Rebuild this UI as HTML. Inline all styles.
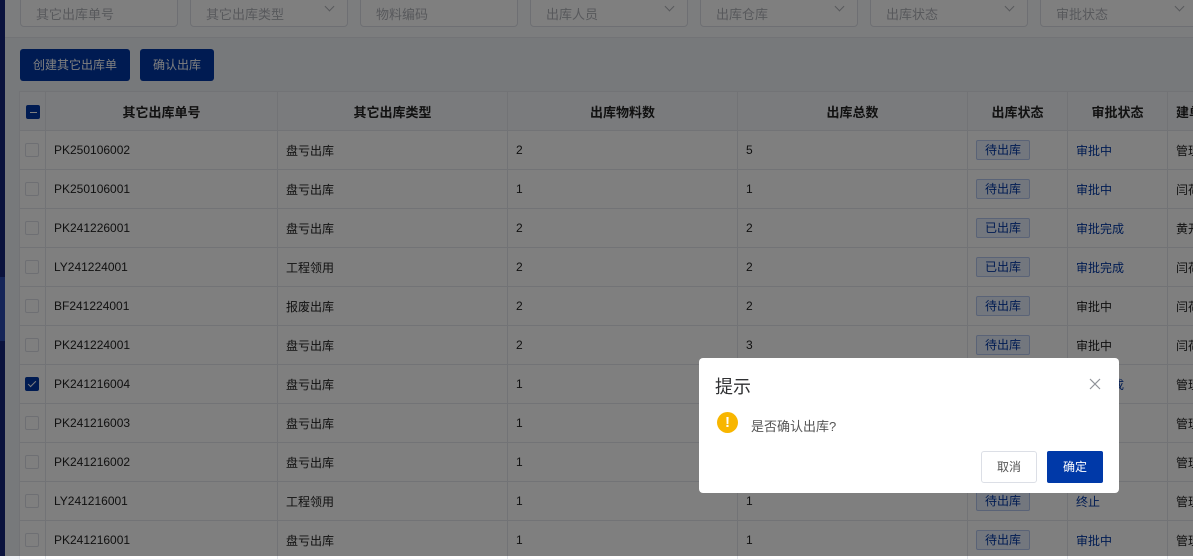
<!DOCTYPE html>
<html><head><meta charset="utf-8"><style>
*{box-sizing:border-box;margin:0;padding:0}
body{width:1193px;height:556px;overflow:hidden;position:relative;background:#eff2f6;font-family:"Liberation Sans","Noto Sans CJK SC",sans-serif;font-size:12px;color:#222}
.strip{position:absolute;left:0;top:0;width:5px;height:556px;background:#14257a}
.strip2{position:absolute;left:0;top:277px;width:5px;height:64px;background:#2a4bb0}
.filt{position:absolute;left:5px;top:0;width:1188px;height:38px;background:#f9fafc;border-bottom:1px solid #e4e7ed}
.in{position:absolute;top:-6px;width:158px;height:33px;border:1px solid #dcdfe6;border-radius:4px;background:#fff;color:#b0b3b9;font-size:13px;padding:9px 0 0 15px}
.in .ar{position:absolute;right:14px;top:8px;width:7px;height:7px;border-right:1px solid #b0b3b9;border-bottom:1px solid #b0b3b9;transform:rotate(45deg)}
.btn{position:absolute;top:49px;height:32px;background:#0037a4;color:#fff;border-radius:3px;font-size:12px;line-height:32px;text-align:center}
table{position:absolute;left:19px;top:91px;width:1208px;border-collapse:collapse;table-layout:fixed;background:#fff}
td,th{border:1px solid #e4e7ed;height:39px;padding:0 8px;white-space:nowrap;overflow:hidden;font-size:12px}
th{background:#f5f7fa;font-weight:bold;color:#222;font-size:13px}
.cb{display:inline-block;width:14px;height:14px;border:1px solid #dcdfe6;border-radius:2px;background:#fff;vertical-align:middle;position:relative}
.cb.on{background:#0037a4;border-color:#0037a4}
.tag{display:inline-block;border:1px solid #b4c6ee;background:#e6eefc;color:#0037a4;padding:0 8px;height:20px;line-height:18px;border-radius:2px}
.bl{color:#0037a4}
.ov{position:absolute;left:0;top:0;width:1193px;height:556px;background:rgba(0,0,0,.5)}
.dlg{position:absolute;left:699px;top:358px;width:420px;height:135px;background:#fff;border-radius:4px}
</style></head><body>
<div class="strip"></div><div class="strip2"></div>
<div class="filt">
<div class="in" style="left:15px">其它出库单号</div>
<div class="in" style="left:185px">其它出库类型<span class="ar"></span></div>
<div class="in" style="left:355px">物料编码</div>
<div class="in" style="left:525px">出库人员<span class="ar"></span></div>
<div class="in" style="left:695px">出库仓库<span class="ar"></span></div>
<div class="in" style="left:865px">出库状态<span class="ar"></span></div>
<div class="in" style="left:1035px">审批状态<span class="ar"></span></div>
</div>
<div class="btn" style="left:20px;width:110px">创建其它出库单</div>
<div class="btn" style="left:140px;width:74px">确认出库</div>
<table>
<colgroup><col style="width:26px"><col style="width:232px"><col style="width:230px"><col style="width:230px"><col style="width:230px"><col style="width:100px"><col style="width:100px"><col style="width:60px"></colgroup>
<tr><th style="padding:0 5px"><span class="cb on"><span style="position:absolute;left:3px;top:6px;width:7px;height:1px;background:#fff"></span></span></th><th>其它出库单号</th><th>其它出库类型</th><th>出库物料数</th><th>出库总数</th><th>出库状态</th><th>审批状态</th><th style="text-align:left">建单人</th></tr>
<tr><td style="padding:0 5px"><span class="cb"></span></td><td>PK250106002</td><td>盘亏出库</td><td>2</td><td>5</td><td><span class="tag">待出库</span></td><td class="bl">审批中</td><td>管理员</td></tr>
<tr><td style="padding:0 5px"><span class="cb"></span></td><td>PK250106001</td><td>盘亏出库</td><td>1</td><td>1</td><td><span class="tag">待出库</span></td><td class="bl">审批中</td><td>闫荷</td></tr>
<tr><td style="padding:0 5px"><span class="cb"></span></td><td>PK241226001</td><td>盘亏出库</td><td>2</td><td>2</td><td><span class="tag">已出库</span></td><td class="bl">审批完成</td><td>黄开</td></tr>
<tr><td style="padding:0 5px"><span class="cb"></span></td><td>LY241224001</td><td>工程领用</td><td>2</td><td>2</td><td><span class="tag">已出库</span></td><td class="bl">审批完成</td><td>闫荷</td></tr>
<tr><td style="padding:0 5px"><span class="cb"></span></td><td>BF241224001</td><td>报废出库</td><td>2</td><td>2</td><td><span class="tag">待出库</span></td><td>审批中</td><td>闫荷</td></tr>
<tr><td style="padding:0 5px"><span class="cb"></span></td><td>PK241224001</td><td>盘亏出库</td><td>2</td><td>3</td><td><span class="tag">待出库</span></td><td>审批中</td><td>闫荷</td></tr>
<tr><td style="padding:0 5px"><span class="cb on"><span style="position:absolute;left:4px;top:1px;width:4px;height:8px;border-right:1.5px solid #fff;border-bottom:1.5px solid #fff;transform:rotate(45deg)"></span></span></td><td>PK241216004</td><td>盘亏出库</td><td>1</td><td>1</td><td><span class="tag">待出库</span></td><td class="bl">审批完成</td><td>管理员</td></tr>
<tr><td style="padding:0 5px"><span class="cb"></span></td><td>PK241216003</td><td>盘亏出库</td><td>1</td><td>1</td><td><span class="tag">待出库</span></td><td class="bl">审批中</td><td>管理员</td></tr>
<tr><td style="padding:0 5px"><span class="cb"></span></td><td>PK241216002</td><td>盘亏出库</td><td>1</td><td>1</td><td><span class="tag">待出库</span></td><td class="bl">审批中</td><td>管理员</td></tr>
<tr><td style="padding:0 5px"><span class="cb"></span></td><td>LY241216001</td><td>工程领用</td><td>1</td><td>1</td><td><span class="tag">待出库</span></td><td class="bl">终止</td><td>管理员</td></tr>
<tr><td style="padding:0 5px"><span class="cb"></span></td><td>PK241216001</td><td>盘亏出库</td><td>1</td><td>1</td><td><span class="tag">待出库</span></td><td class="bl">审批中</td><td>管理员</td></tr>
</table>
<div class="ov"></div>
<div class="dlg">
<div style="position:absolute;left:16px;top:15px;font-size:18px;color:#303133">提示</div>
<svg style="position:absolute;left:390px;top:20px" width="12" height="12" viewBox="0 0 12 12"><path d="M1 1L11 11M11 1L1 11" stroke="#909399" stroke-width="1.2"/></svg>
<div style="position:absolute;left:18px;top:54px;width:21px;height:21px;border-radius:50%;background:#f8b600;color:#fff;font-weight:bold;font-size:15px;line-height:21px;text-align:center">!</div>
<div style="position:absolute;left:52px;top:58px;font-size:13px;color:#555">是否确认出库?</div>
<div style="position:absolute;left:282px;top:93px;width:56px;height:32px;border:1px solid #dcdfe6;border-radius:3px;text-align:center;line-height:30px;color:#555">取消</div>
<div style="position:absolute;left:348px;top:93px;width:56px;height:32px;background:#0039a8;border-radius:2px;text-align:center;line-height:32px;color:#fff">确定</div>
</div>
</body></html>
